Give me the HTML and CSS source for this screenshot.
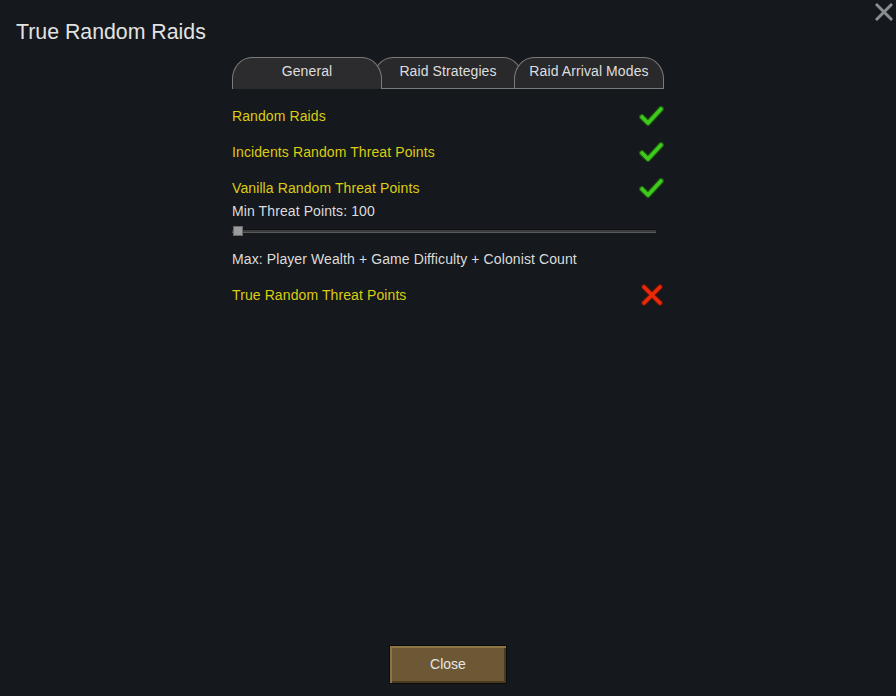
FILE: index.html
```html
<!DOCTYPE html>
<html>
<head>
<meta charset="utf-8">
<link rel="stylesheet" href="styles.css">
</head>
<body>
<div class="window">
  <div class="header">
    <div class="title">True Random Raids</div>
    <svg class="close-x" width="18" height="18" viewBox="0 0 18 18"><path d="M2 2 L16 16 M16 2 L2 16" stroke="#8b8e91" stroke-width="3" stroke-linecap="square"/></svg>
  </div>
  <div class="content">
    <div class="tabs">
      <div class="tab active">General</div>
      <div class="tab">Raid Strategies</div>
      <div class="tab">Raid Arrival Modes</div>
    </div>
    <div class="list">
      <div class="row">
        <span class="opt">Random Raids</span>
        <svg class="check" width="25" height="20" viewBox="0 0 25 20"><path d="M3 11 L9 17 L22 3" fill="none" stroke="#1f5a12" stroke-width="6" stroke-linecap="round" stroke-linejoin="round"/><path d="M3 11 L9 17 L22 3" fill="none" stroke="#3fcb1b" stroke-width="3.6" stroke-linecap="round" stroke-linejoin="round"/></svg>
      </div>
      <div class="row">
        <span class="opt">Incidents Random Threat Points</span>
        <svg class="check" width="25" height="20" viewBox="0 0 25 20"><path d="M3 11 L9 17 L22 3" fill="none" stroke="#1f5a12" stroke-width="6" stroke-linecap="round" stroke-linejoin="round"/><path d="M3 11 L9 17 L22 3" fill="none" stroke="#3fcb1b" stroke-width="3.6" stroke-linecap="round" stroke-linejoin="round"/></svg>
      </div>
      <div class="row">
        <span class="opt">Vanilla Random Threat Points</span>
        <svg class="check" width="25" height="20" viewBox="0 0 25 20"><path d="M3 11 L9 17 L22 3" fill="none" stroke="#1f5a12" stroke-width="6" stroke-linecap="round" stroke-linejoin="round"/><path d="M3 11 L9 17 L22 3" fill="none" stroke="#3fcb1b" stroke-width="3.6" stroke-linecap="round" stroke-linejoin="round"/></svg>
      </div>
      <div class="label">Min Threat Points: 100</div>
      <div class="slider">
        <div class="track"></div>
        <div class="thumb"></div>
      </div>
      <div class="label max">Max: Player Wealth + Game Difficulty + Colonist Count</div>
      <div class="row last">
        <span class="opt">True Random Threat Points</span>
        <svg class="cross" width="24" height="24" viewBox="0 0 24 24"><path d="M4 4 L20 20 M20 4 L4 20" stroke="#5a1608" stroke-width="6" stroke-linecap="round"/><path d="M4 4 L20 20 M20 4 L4 20" stroke="#ea2a0b" stroke-width="3.6" stroke-linecap="round"/></svg>
      </div>
    </div>
  </div>
  <div class="footer">
    <div class="btn">Close</div>
  </div>
</div>
</body>
</html>
```
FILE: styles.css
```css
html, body {
  margin: 0;
  padding: 0;
  background: #15181c;
}
.window {
  width: 896px;
  height: 696px;
  display: flex;
  flex-direction: column;
  font-family: "Liberation Sans", Arial, sans-serif;
  color: #dcdcdc;
  box-sizing: border-box;
}
.header {
  display: flex;
  justify-content: space-between;
  align-items: flex-start;
}
.title {
  margin: 20px 0 0 16px;
  font-size: 21.3px;
  line-height: 24px;
  color: #e2e2e2;
}
.close-x {
  margin: 3px 3px 0 0;
}
.content {
  margin: 13px 0 0 232px;
  width: 432px;
}
.tabs {
  display: flex;
  height: 32px;
}
.tab {
  position: relative;
  width: 150px;
  height: 32px;
  box-sizing: border-box;
  flex: none;
  text-align: center;
  font-size: 14px;
  line-height: 26px;
  letter-spacing: 0.1px;
  color: #dedede;
  background: #29292b;
  border: 1px solid #7b7b7d;
  border-radius: 20px 20px 0 0 / 22px 22px 0 0;
  margin-left: -9px;
}
.tab:first-child {
  margin-left: 0;
}
.tab.active {
  background: #2c2c2e;
  border-bottom: none;
  z-index: 2;
}
.list {
  padding-top: 15px;
  letter-spacing: 0.1px;
}
.row {
  height: 24px;
  margin-bottom: 12px;
  display: flex;
  justify-content: space-between;
  align-items: center;
}
.opt {
  font-size: 14px;
  color: #dccc12;
  margin-top: -1px;
}
.label {
  height: 22px;
  line-height: 22px;
  font-size: 14px;
  color: #dcdcdc;
  margin-top: -12px;
}
.label.max {
  margin-top: 8px;
}
.slider {
  position: relative;
  height: 18px;
  width: 424px;
}
.track {
  position: absolute;
  left: 0;
  right: 0;
  top: 7px;
  height: 4px;
  background: #3b3c3e;
  border-top: 1px solid #0f1012;
  border-bottom: 1px solid #5a5b5d;
  box-sizing: border-box;
}
.thumb {
  position: absolute;
  left: 1px;
  top: 4px;
  width: 10px;
  height: 10px;
  background: #9c9c9c;
  border: 1px solid #6a6a6a;
  box-sizing: border-box;
}
.row.last {
  margin-top: 13px;
}
.footer {
  margin-top: auto;
  display: flex;
  justify-content: center;
  padding-bottom: 12px;
}
.btn {
  width: 118px;
  height: 39px;
  box-sizing: border-box;
  background: #6c5834;
  border: 1px solid #0c0c0c;
  box-shadow: inset 2px 2px 0 #8d7546, inset -2px -2px 0 #4a3b20;
  text-align: center;
  line-height: 37px;
  font-size: 14px;
  color: #e6e6e6;
}
```
